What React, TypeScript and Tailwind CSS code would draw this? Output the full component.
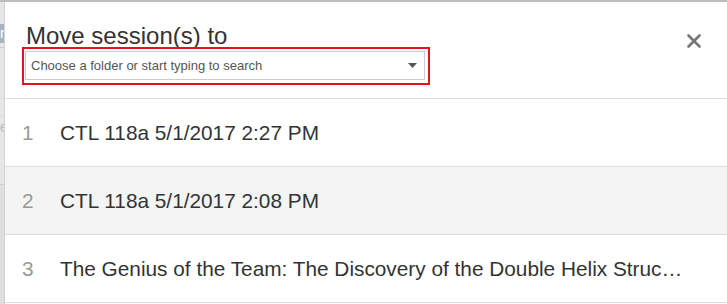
import { X } from "lucide-react";

const SESSIONS = [
  "CTL 118a 5/1/2017 2:27 PM",
  "CTL 118a 5/1/2017 2:08 PM",
  "The Genius of the Team: The Discovery of the Double Helix Structure of DNA",
];

export default function App() {
  return (
    <div
      className="flex w-[727px] h-[304px] overflow-hidden border-t-2 border-[#bdbdbd] bg-white"
      style={{ fontFamily: '"Liberation Sans", Arial, sans-serif' }}
    >
      {/* page behind the modal */}
      <div className="w-[5px] shrink-0 bg-[#e6e6e6] border-r border-[#d2d2d2] flex flex-col">
        <div className="h-[22px]" />
        <div className="h-[19px] bg-[#a7b4c1] text-[14px] leading-[19px] text-white overflow-hidden">r</div>
        <div className="h-[5px] border-b border-[#d0d0d0]" />
        <div className="h-[50px]" />
        <div className="h-[19px] border-t border-[#dcdcdc] border-b border-[#cfcfcf]" />
        <div className="h-[20px] text-[14px] leading-[20px] text-[#bbb] overflow-hidden">e</div>
        <div className="h-[48px] border-b border-[#cfcfcf]" />
        <div className="flex-1 bg-[#dedede]" />
      </div>

      {/* modal */}
      <div className="flex-1 min-w-0 flex flex-col">
        <div className="flex items-start justify-between pl-[17px] pr-[22px] pt-[23px] pb-[13px] border-b border-[#dddddd]">
          <div className="flex flex-col">
            <h2 className="text-[24px] leading-[22px] text-[#333] pl-[4px]">Move session(s) to</h2>
            <div className="w-[408px] h-[38px] border-2 border-[#e3141b] pt-[2px] pl-px pr-[3px] pb-[3px]">
              <div className="h-full flex items-center justify-between border border-[#cccccc] bg-white pl-[5px] pr-[7px]">
                <span className="text-[13px] text-[#555]">Choose a folder or start typing to search</span>
                <svg width="9" height="5" viewBox="0 0 9 5">
                  <path d="M0 0h9L4.5 5z" fill="#555" />
                </svg>
              </div>
            </div>
          </div>
          <button className="mt-[5px] text-[#777]">
            <X size={22} strokeWidth={2.9} />
          </button>
        </div>

        <ul className="flex flex-col">
          {SESSIONS.map((s, i) => (
            <li
              key={i}
              className={`flex items-center min-w-0 h-[68px] border-b border-[#dddddd] pl-[17px] pr-[44px] text-[20.8px] ${
                i === 1 ? "bg-[#f4f4f4]" : "bg-white"
              }`}
            >
              <span className="w-[38px] shrink-0 text-[#999]">{i + 1}</span>
              <span className="min-w-0 truncate text-[#333]">{s}</span>
            </li>
          ))}
        </ul>
      </div>
    </div>
  );
}
